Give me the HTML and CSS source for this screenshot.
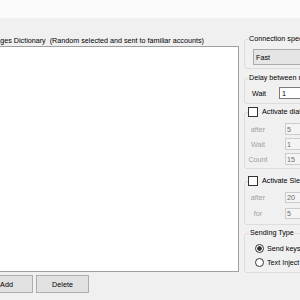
FILE: index.html
```html
<!DOCTYPE html>
<html lang="en">
<head>
    <meta charset="UTF-8">
    <title>Messages Dictionary</title>
    <link rel="stylesheet" href="styles.css">
</head>
<body>
    <div class="topbar"></div>

    <div class="main">
        <div class="dict">
            <div class="dict-label">Messages Dictionary&nbsp; (Random selected and sent to familiar accounts)</div>
            <textarea class="dict-box"></textarea>
            <div class="dict-buttons">
                <button class="btn">Add</button>
                <button class="btn">Delete</button>
            </div>
        </div>

        <div class="settings">
            <fieldset class="group group-speed">
                <legend class="caption">Connection speed</legend>
                <select class="speed-select"><option>Fast</option></select>
            </fieldset>

            <fieldset class="group group-delay">
                <legend class="caption">Delay between messages</legend>
                <div class="row">
                    <span class="row-label">Wait</span>
                    <input class="num" type="text" value="1">
                </div>
            </fieldset>

            <fieldset class="group group-dial">
                <legend class="check-caption"><input class="check" type="checkbox"><span>Activate dialing pause</span></legend>
                <div class="rows">
                    <div class="row"><span class="row-label off">after</span><input class="num off" type="text" value="5" disabled></div>
                    <div class="row"><span class="row-label off">Wait</span><input class="num off" type="text" value="1" disabled></div>
                    <div class="row"><span class="row-label off">Count</span><input class="num off" type="text" value="15" disabled></div>
                </div>
            </fieldset>

            <fieldset class="group group-sleep">
                <legend class="check-caption"><input class="check" type="checkbox"><span>Activate Sleep mode</span></legend>
                <div class="rows">
                    <div class="row"><span class="row-label off">after</span><input class="num off" type="text" value="20" disabled></div>
                    <div class="row"><span class="row-label off">for</span><input class="num off" type="text" value="5" disabled></div>
                </div>
            </fieldset>

            <fieldset class="group group-type">
                <legend class="caption">Sending Type</legend>
                <div class="radios">
                    <label class="radio-row"><input class="radio" type="radio" name="type" checked>Send keystrokes</label>
                    <label class="radio-row"><input class="radio" type="radio" name="type">Text Inject</label>
                </div>
            </fieldset>
        </div>
    </div>
</body>
</html>
```

FILE: styles.css
```css
body {
    margin: 0;
    width: 300px;
    height: 300px;
    overflow: hidden;
    background-color: #f0f0f0;
    font-family: 'Liberation Sans', Arial, sans-serif;
    font-size: 7.2px;
    color: #000;
}
.topbar {
    height: 18px;
    background-color: #fbfbfb;
}
.main {
    display: flex;
    align-items: flex-start;
    margin-left: -25px;
}
.dict {
    width: 264px;
    flex-shrink: 0;
    padding-top: 18px;
}
.dict-label {
    line-height: 10px;
    padding-left: 4px;
    white-space: nowrap;
}
.dict-box {
    display: block;
    width: 264px;
    height: 226px;
    box-sizing: border-box;
    margin: 0;
    padding: 0;
    border: 1px solid #a0a0a0;
    background-color: #fff;
    resize: none;
}
.dict-buttons {
    display: flex;
    gap: 3px;
    padding-left: 5px;
    margin-top: 3px;
}
.btn {
    width: 53px;
    height: 18px;
    padding: 0;
    border: 1px solid #adadad;
    background-color: #e1e1e1;
    font-family: inherit;
    font-size: 7.2px;
    color: #000;
}

.settings {
    width: 90px;
    flex-shrink: 0;
    margin-left: 5px;
    padding-top: 16px;
}
.group {
    margin: 0;
    padding: 0;
    min-width: 0;
    border: 1px solid #dcdcdc;
    border-radius: 3px;
}
.caption {
    margin-left: 3px;
    padding: 0 1px;
    line-height: 10px;
    white-space: nowrap;
}
.check-caption {
    display: flex;
    align-items: center;
    margin-left: 3px;
    padding: 0 1px 0 0;
    height: 10px;
    line-height: 10px;
    white-space: nowrap;
}
.check {
    appearance: none;
    width: 10px;
    height: 10px;
    margin: 0 4px 0 0;
    box-sizing: border-box;
    border: 1px solid #333;
    background-color: #fff;
}

.group-speed .speed-select {
    display: block;
    appearance: none;
    width: 70px;
    height: 16px;
    margin: 5px 0 3px 8px;
    padding: 0 2px;
    border: 1px solid #acacac;
    border-radius: 0;
    background-color: #e5e5e5;
    font-family: inherit;
    font-size: 7.2px;
    color: #000;
}

.group-delay {
    margin-top: 4px;
}
.group-delay .row {
    margin: 4px 0 4px 0;
}
.group-delay .row-label {
    width: 33px;
    padding-left: 6px;
    text-align: left;
}
.group-delay .num {
    height: 12px;
}

.row {
    display: flex;
    align-items: center;
}
.row-label {
    box-sizing: border-box;
    width: 24px;
    margin-left: 1px;
    text-align: center;
}
.num {
    box-sizing: border-box;
    width: 40px;
    height: 12px;
    margin: 0;
    padding: 0 2px;
    border: 1px solid #7a7a7a;
    background-color: #fff;
    font-family: inherit;
    font-size: 7.2px;
    color: #000;
}
.off {
    color: #a0a0a0;
}
.num.off {
    border-color: #cccccc;
    background-color: #f4f4f4;
    color: #6d6d6d;
    padding-left: 1px;
}

.group-dial {
    margin-top: 3px;
}
.group-dial .rows {
    display: flex;
    flex-direction: column;
    gap: 3px;
    margin: 6px 0 3px 0;
}
.group-dial .num,
.group-sleep .num {
    margin-left: 15px;
}

.group-sleep {
    margin-top: 7px;
}
.group-sleep .rows {
    display: flex;
    flex-direction: column;
    gap: 5px;
    margin: 6px 0 5px 0;
}
.group-sleep .num {
    height: 11px;
}

.group-type {
    margin-top: 3px;
}
.group-type .caption {
    margin-left: 4px;
}
.radios {
    display: flex;
    flex-direction: column;
    gap: 5px;
    margin: 6px 0 5px 0;
}
.radio-row {
    display: flex;
    align-items: center;
    height: 9px;
    white-space: nowrap;
}
.radio {
    appearance: none;
    width: 9px;
    height: 9px;
    margin: 0 3px 0 10px;
    box-sizing: border-box;
    border: 1px solid #333;
    border-radius: 50%;
    background-color: #fff;
}
.radio:checked {
    background: radial-gradient(circle, #333 0, #333 2px, #fff 2.5px);
}
```
